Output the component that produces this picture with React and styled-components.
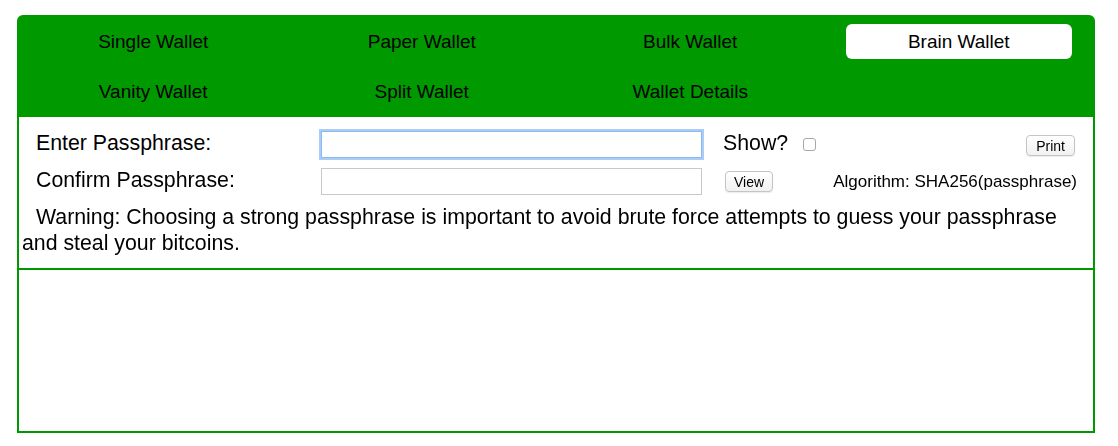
import React from "react";
import styled, { createGlobalStyle } from "styled-components";

const Global = createGlobalStyle`
  html, body { margin: 0; padding: 0; background: #fff; }
  body { font-family: "Liberation Sans", Arial, Helvetica, sans-serif; color: #000; }
`;

const Page = styled.div`
  padding: 15px 23px 13px 17px;
`;

const Frame = styled.div`
  width: 1078px;
  display: flex;
  flex-direction: column;
`;

const Tabs = styled.nav`
  background: #009900;
  border-radius: 6px 6px 0 0;
  display: grid;
  grid-template-columns: repeat(4, 1fr);
  row-gap: 15px;
  padding: 9px 2px 8px;
`;

const Tab = styled.div`
  width: 84%;
  justify-self: center;
  height: 35px;
  display: flex;
  align-items: center;
  justify-content: center;
  font-size: 19px;
  border-radius: 6px;
  background: ${(p) => (p.$active ? "#fff" : "transparent")};
  cursor: pointer;
`;

const Panel = styled.section`
  border: 2px solid #009900;
  border-top: none;
  height: ${(p) => p.$h}px;
  box-sizing: border-box;
`;

const FormPanel = styled(Panel)`
  padding: 14px 16px 0 3px;
  display: flex;
  flex-direction: column;
`;

const Grid = styled.div`
  display: grid;
  grid-template-columns: 285px 381px 1fr auto;
  grid-auto-rows: 27px;
  row-gap: 10px;
  align-items: center;
  padding-left: 14px;
`;

const Label = styled.label`
  font-size: 21.3px;
  margin-top: -3px;
`;

const TextInput = styled.input`
  box-sizing: border-box;
  height: 27px;
  width: 381px;
  margin: 0;
  font-size: 15px;
  padding: 0 5px;
  border: 1px solid #c9c9c9;
  border-radius: 0;
  outline: none;
  ${(p) =>
    p.$focus &&
    `
    border: 1px solid #8ab8ef;
    box-shadow: 0 0 0 2px #a9cdf7;
  `}
  &:focus {
    border: 1px solid #8ab8ef;
    box-shadow: 0 0 0 2px #a9cdf7;
  }
`;

const Controls = styled.div`
  display: flex;
  align-items: center;
  gap: 15px;
  padding-left: 21px;
  font-size: 21.3px;
  margin-top: -3px;
`;

const Check = styled.input`
  appearance: none;
  width: 13px;
  height: 13px;
  margin: 3px 0 0;
  border: 1px solid #a8a8a8;
  border-radius: 3px;
  background: #fff;
`;

const Button = styled.button`
  font-family: "Liberation Sans", Arial, sans-serif;
  font-size: 14px;
  height: 21px;
  padding: 0 ${(p) => p.$px || 8}px;
  margin-left: ${(p) => p.$ml || 0}px;
  margin-top: ${(p) => p.$mt || 0}px;
  border: 1px solid #c4c4c4;
  border-radius: 4px;
  background: linear-gradient(#ffffff, #f1f1f1);
  color: #000;
  box-shadow: 0 1px 1px rgba(0,0,0,0.08);
`;

const Right = styled.div`
  justify-self: end;
  display: flex;
  align-items: center;
  font-size: 17px;
  margin-right: ${(p) => p.$mr || 0}px;
`;

const Warning = styled.p`
  margin: 9px 0 0;
  font-size: 21.3px;
  line-height: 26px;
  text-indent: 14px;
`;

const tabs = [
  "Single Wallet",
  "Paper Wallet",
  "Bulk Wallet",
  "Brain Wallet",
  "Vanity Wallet",
  "Split Wallet",
  "Wallet Details",
];

export default function App() {
  return (
    <Page>
      <Global />
      <Frame>
        <Tabs>
          {tabs.map((t) => (
            <Tab key={t} $active={t === "Brain Wallet"}>
              {t}
            </Tab>
          ))}
        </Tabs>
        <FormPanel $h={153}>
          <Grid>
            <Label>Enter Passphrase:</Label>
            <TextInput type="password" $focus autoFocus />
            <Controls>
              <span>Show?</span>
              <Check type="checkbox" />
            </Controls>
            <Right $mr={2}>
              <Button $px={9} $mt={2}>Print</Button>
            </Right>
            <Label>Confirm Passphrase:</Label>
            <TextInput type="password" />
            <Controls>
              <Button $ml={2} $mt={3}>View</Button>
            </Controls>
            <Right>Algorithm: SHA256(passphrase)</Right>
          </Grid>
          <Warning>
            Warning: Choosing a strong passphrase is important to avoid brute
            force attempts to guess your passphrase and steal your bitcoins.
          </Warning>
        </FormPanel>
        <Panel $h={163} />
      </Frame>
    </Page>
  );
}
